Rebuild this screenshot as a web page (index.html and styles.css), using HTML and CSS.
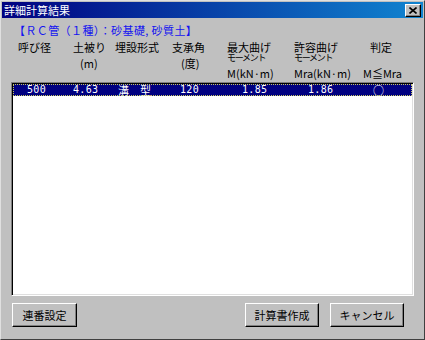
FILE: index.html
```html
<!DOCTYPE html>
<html lang="ja">
<head>
<meta charset="utf-8">
<link rel="stylesheet" href="styles.css">
</head>
<body>
<div class="dialog">
  <div class="titlebar">
    <span class="title">詳細計算結果</span>
    <span class="close"><svg width="8" height="7" viewBox="0 0 8 7"><path d="M0.5 0.5 L7.5 6.5 M7.5 0.5 L0.5 6.5" stroke="#000" stroke-width="1.6"/></svg></span>
  </div>
  <div class="content">
    <div class="caption">【ＲＣ管（１種）：砂基礎, 砂質土】</div>
    <div class="headers">
      <div class="h c1"><span class="l1">呼び径</span></div>
      <div class="h c2"><span class="l1">土被り</span><span class="unit">(m)</span></div>
      <div class="h c3"><span class="l1">埋設形式</span></div>
      <div class="h c4"><span class="l1">支承角</span><span class="unit">(度)</span></div>
      <div class="h c5"><span class="l1">最大曲げ</span><span class="small">モーメント</span><span class="l3">M(kN·m)</span></div>
      <div class="h c6"><span class="l1">許容曲げ</span><span class="small">モーメント</span><span class="l3">Mra(kN·m)</span></div>
      <div class="h c7"><span class="l1">判定</span><span class="l3 judge">M≦Mra</span></div>
    </div>
    <div class="listbox">
      <div class="row selected">
        <span class="v v1 num">500</span>
        <span class="v v2 num">4.63</span>
        <span class="v v3">溝　型</span>
        <span class="v v4 num">120</span>
        <span class="v v5 num">1.85</span>
        <span class="v v6 num">1.86</span>
        <span class="v v7">○</span>
      </div>
    </div>
    <div class="buttons">
      <button class="btn btn-left">連番設定</button>
      <div class="spacer"></div>
      <button class="btn btn-wide">計算書作成</button>
      <button class="btn btn-wide">キャンセル</button>
    </div>
  </div>
</div>
</body>
</html>
```
FILE: styles.css
```css
html, body {
  margin: 0;
  padding: 0;
  background: #c0c0c0;
}
body {
  width: 425px;
  height: 340px;
  overflow: hidden;
  font-family: "Noto Sans CJK JP", "Noto Sans", sans-serif;
  font-size: 11px;
  color: #000;
}
.dialog {
  box-sizing: border-box;
  width: 425px;
  height: 340px;
  background: #c0c0c0;
  border-top: 1px solid #e0e0e0;
  border-left: 1px solid #e0e0e0;
  border-right: 1px solid #404040;
  border-bottom: 1px solid #404040;
  padding: 1px;
  display: flex;
  flex-direction: column;
}
.titlebar {
  height: 16px;
  background: linear-gradient(to right, #000080, #1084d0);
  display: flex;
  align-items: center;
  justify-content: space-between;
  padding: 0 2px 0 2px;
}
.title {
  color: #fff;
  font-size: 11px;
  line-height: 14px;
}
.close {
  box-sizing: border-box;
  width: 16px;
  height: 13px;
  background: #c0c0c0;
  border-top: 1px solid #fff;
  border-left: 1px solid #fff;
  border-right: 1px solid #000;
  border-bottom: 1px solid #000;
  box-shadow: inset -1px -1px 0 #808080;
  display: flex;
  align-items: center;
  justify-content: center;
}
.content {
  flex: 1;
  display: flex;
  flex-direction: column;
  padding: 6px 9px 0 9px;
}
.caption {
  color: #1414f0;
  font-size: 11px;
  line-height: 12px;
  height: 12px;
  padding-left: 3px;
  letter-spacing: 0.4px;
}
.headers {
  margin-top: 5px;
  height: 38px;
  display: grid;
  grid-template-columns: 55px 44px 56px 58px 66px 68px 55px;
}
.h {
  display: flex;
  flex-direction: column;
  align-items: flex-start;
  line-height: 12px;
}
.h .l1 { height: 12px; }
.h .unit { margin-top: 4px; height: 12px; }
.h .small {
  margin-top: 0;
  font-size: 9px;
  line-height: 9px;
  height: 9px;
  letter-spacing: -1.3px;
}
.h .l3 { margin-top: 5px; height: 12px; }
.h .judge { margin-top: 14px; }
.c1 { padding-left: 7px; }
.c2 { padding-left: 7px; }
.c2 .unit { padding-left: 7px; }
.c3 { padding-left: 5px; }
.c4 { padding-left: 6px; }
.c4 .unit { padding-left: 9px; }
.c5 { padding-left: 3px; }
.c6 { padding-left: 4px; }
.c7 { padding-left: 5px; }
.c7 .l1 { padding-left: 7px; }
.listbox {
  margin-top: 3px;
  height: 214px;
  box-sizing: border-box;
  background: #fff;
  border-top: 1px solid #808080;
  border-left: 1px solid #808080;
  border-right: 1px solid #fff;
  border-bottom: 1px solid #fff;
  box-shadow: inset 1px 1px 0 #000, inset -1px -1px 0 #dfdfdf;
  padding: 1px;
}
.row {
  display: grid;
  grid-template-columns: 53px 44px 56px 58px 66px 68px 1fr;
  height: 12px;
  line-height: 12px;
  box-sizing: border-box;
}
.row.selected {
  background: #000080;
  color: #fff;
  outline: 1px dotted #c8c860;
  outline-offset: -1px;
}
.v { white-space: nowrap; }
.num {
  font-family: "DejaVu Sans Mono", "Liberation Mono", monospace;
  font-size: 10px;
  letter-spacing: 0.3px;
}
.v1 { padding-left: 14px; }
.v2 { padding-left: 7px; }
.v3 { padding-left: 8px; }
.v4 { padding-left: 14px; }
.v5 { padding-left: 18px; }
.v6 { padding-left: 18px; }
.v7 { padding-left: 15px; }
.buttons {
  margin-top: 7px;
  display: flex;
  gap: 11px;
  padding-left: 1px;
}
.spacer { flex: 1; }
.btn {
  box-sizing: border-box;
  height: 24px;
  background: #c0c0c0;
  font-family: "Noto Sans CJK JP", "Noto Sans", sans-serif;
  font-size: 11px;
  color: #000;
  padding: 0;
  border-top: 1px solid #fff;
  border-left: 1px solid #fff;
  border-right: 1px solid #000;
  border-bottom: 1px solid #000;
  box-shadow: inset -1px -1px 0 #808080;
}
.btn-left { width: 65px; }
.btn-wide { width: 74px; }
.btn-wide:last-child { margin-right: 10px; }
```
